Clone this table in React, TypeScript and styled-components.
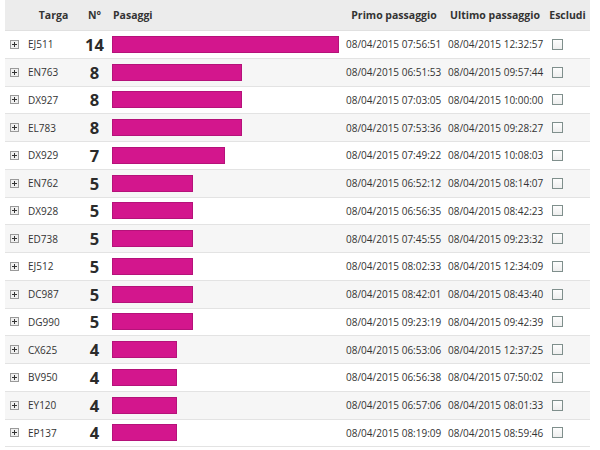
import React from "react";
import styled, { createGlobalStyle } from "styled-components";

const Global = createGlobalStyle`
  html, body { margin: 0; padding: 0; background: #fff; }
  body { font-family: "Open Sans", "DejaVu Sans", sans-serif; color: #333; }
`;

const COLS = "17px 63px 19px 239px 102px 100px 45px";

const Table = styled.div`
  margin-left: 5px;
  width: 585px;
`;

const HeaderRow = styled.div`
  display: grid;
  grid-template-columns: ${COLS};
  height: 31px;
  align-items: center;
  background: #ececec;
  border-bottom: 1px solid #e0e0e0;
  box-sizing: border-box;
  font-weight: 700;
  font-size: 10.5px;
  color: #333;
`;

const HeadCell = styled.div<{ $align?: string; $pad?: number }>`
  text-align: ${(p) => p.$align || "center"};
  padding-left: ${(p) => p.$pad || 0}px;
  white-space: nowrap;
`;

const Row = styled.div<{ $alt: boolean }>`
  display: grid;
  grid-template-columns: ${COLS};
  height: 27.75px;
  align-items: center;
  box-sizing: border-box;
  border-bottom: 1px solid #e3e3e3;
  background: ${(p) => (p.$alt ? "#f6f6f6" : "#fff")};
  font-size: 10px;
`;

const Cell = styled.div<{ $pad?: number }>`
  padding-left: ${(p) => p.$pad || 0}px;
  white-space: nowrap;
  display: flex;
  align-items: center;
`;

const Count = styled.div`
  font-size: 16.5px;
  font-weight: 700;
  text-align: center;
  color: #2b2b2b;
`;

const Bar = styled.div`
  height: 17px;
  box-sizing: border-box;
  background: #d3168d;
  border: 1px solid #b5127a;
`;

const Check = styled.span`
  display: inline-block;
  width: 11px;
  height: 11px;
  box-sizing: border-box;
  border: 1px solid #7f8f8c;
  background: linear-gradient(#fdfdfd, #eeeeee);
`;

const Expand = () => (
  <svg width="9" height="9" viewBox="0 0 9 9" style={{ marginLeft: 5 }}>
    <rect x="0.5" y="0.5" width="8" height="8" fill="#f0f0f0" stroke="#9a9a9a" />
    <path d="M2 4.5h5M4.5 2v5" stroke="#333" strokeWidth="1" />
  </svg>
);

const data: [string, number, string, string][] = [
  ["EJ511", 14, "08/04/2015 07:56:51", "08/04/2015 12:32:57"],
  ["EN763", 8, "08/04/2015 06:51:53", "08/04/2015 09:57:44"],
  ["DX927", 8, "08/04/2015 07:03:05", "08/04/2015 10:00:00"],
  ["EL783", 8, "08/04/2015 07:53:36", "08/04/2015 09:28:27"],
  ["DX929", 7, "08/04/2015 07:49:22", "08/04/2015 10:08:03"],
  ["EN762", 5, "08/04/2015 06:52:12", "08/04/2015 08:14:07"],
  ["DX928", 5, "08/04/2015 06:56:35", "08/04/2015 08:42:23"],
  ["ED738", 5, "08/04/2015 07:45:55", "08/04/2015 09:23:32"],
  ["EJ512", 5, "08/04/2015 08:02:33", "08/04/2015 12:34:09"],
  ["DC987", 5, "08/04/2015 08:42:01", "08/04/2015 08:43:40"],
  ["DG990", 5, "08/04/2015 09:23:19", "08/04/2015 09:42:39"],
  ["CX625", 4, "08/04/2015 06:53:06", "08/04/2015 12:37:25"],
  ["BV950", 4, "08/04/2015 06:56:38", "08/04/2015 07:50:02"],
  ["EY120", 4, "08/04/2015 06:57:06", "08/04/2015 08:01:33"],
  ["EP137", 4, "08/04/2015 08:19:09", "08/04/2015 08:59:46"],
];

export default function App() {
  return (
    <>
      <Global />
      <Table>
        <HeaderRow>
          <HeadCell />
          <HeadCell>Targa</HeadCell>
          <HeadCell>N°</HeadCell>
          <HeadCell $align="left" $pad={9}>Pasaggi</HeadCell>
          <HeadCell>Primo passaggio</HeadCell>
          <HeadCell>Ultimo passaggio</HeadCell>
          <HeadCell>Escludi</HeadCell>
        </HeaderRow>
        {data.map(([t, n, a, b], i) => (
          <Row key={t} $alt={i % 2 === 1}>
            <Cell><Expand /></Cell>
            <Cell $pad={6}>{t}</Cell>
            <Count>{n}</Count>
            <Cell $pad={8}>
              <Bar style={{ width: Math.round(n * 16.2) }} />
            </Cell>
            <Cell $pad={3}>{a}</Cell>
            <Cell $pad={3}>{b}</Cell>
            <Cell $pad={7}><Check /></Cell>
          </Row>
        ))}
      </Table>
    </>
  );
}
